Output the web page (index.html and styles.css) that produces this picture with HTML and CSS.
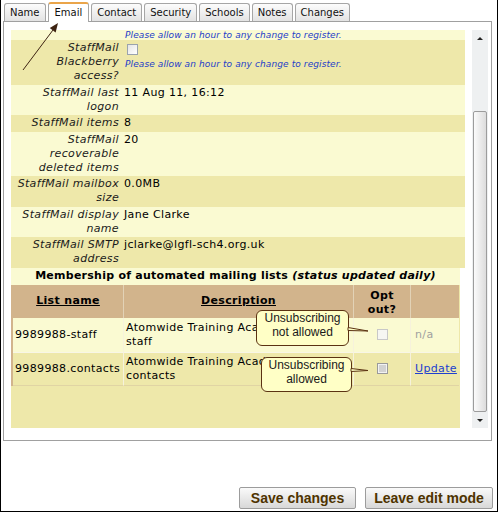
FILE: index.html
```html
<!DOCTYPE html>
<html>
<head>
<meta charset="utf-8">
<link rel="stylesheet" href="styles.css">
</head>
<body>
<div class="frame">
  <div class="tabs">
    <div class="tab">Name</div>
    <div class="tab active">Email</div>
    <div class="tab">Contact</div>
    <div class="tab">Security</div>
    <div class="tab">Schools</div>
    <div class="tab">Notes</div>
    <div class="tab">Changes</div>
  </div>

  <div class="panel">
    <div class="content">
      <div class="info">
        <div class="row light first">
          <div class="lbl"></div>
          <div class="val"><span class="note">Please allow an hour to any change to register.</span></div>
        </div>
        <div class="row dark">
          <div class="lbl">StaffMail Blackberry access?</div>
          <div class="val"><span class="cb cb-block"></span><div class="note note-line">Please allow an hour to any change to register.</div></div>
        </div>
        <div class="row light">
          <div class="lbl">StaffMail last logon</div>
          <div class="val">11 Aug 11, 16:12</div>
        </div>
        <div class="row dark">
          <div class="lbl">StaffMail items</div>
          <div class="val">8</div>
        </div>
        <div class="row light">
          <div class="lbl">StaffMail recoverable deleted items</div>
          <div class="val">20</div>
        </div>
        <div class="row dark">
          <div class="lbl">StaffMail mailbox size</div>
          <div class="val">0.0MB</div>
        </div>
        <div class="row light">
          <div class="lbl">StaffMail display name</div>
          <div class="val">Jane Clarke</div>
        </div>
        <div class="row dark">
          <div class="lbl">StaffMail SMTP address</div>
          <div class="val">jclarke@lgfl-sch4.org.uk</div>
        </div>
      </div>

      <div class="lists">
        <div class="lists-head">Membership of automated mailing lists <i>(status updated daily)</i></div>
        <table class="mtable">
          <colgroup>
            <col class="c-name"><col class="c-desc"><col class="c-opt"><col class="c-act">
          </colgroup>
          <tr class="hrow">
            <th><span class="ul">List name</span></th>
            <th><span class="ul">Description</span></th>
            <th class="opt">Opt<br>out?</th>
            <th class="last"></th>
          </tr>
          <tr class="r r1">
            <td>9989988-staff</td>
            <td>Atomwide Training Academy - all<br>staff</td>
            <td class="center"><span class="cb cb-off"></span></td>
            <td class="last"><span class="na">n/a</span></td>
          </tr>
          <tr class="r r2">
            <td>9989988.contacts</td>
            <td>Atomwide Training Academy - all<br>contacts</td>
            <td class="center"><span class="cb cb-grey"></span></td>
            <td class="last"><a class="link" href="#">Update</a></td>
          </tr>
        </table>
      </div>
    </div>

    <div class="scrollbar">
      <div class="sb-btn"><span class="tri-up"></span></div>
      <div class="sb-space"></div>
      <div class="thumb"></div>
      <div class="sb-btn"><span class="tri-down"></span></div>
    </div>
  </div>

  <div class="buttons">
    <button class="btn btn-save">Save changes</button>
    <button class="btn btn-leave">Leave edit mode</button>
  </div>

  <div class="overlay">
    <div class="callout c1">Unsubscribing<br>not allowed</div>
    <div class="callout c2">Unsubscribing<br>allowed</div>
    <svg class="ov-svg" width="498" height="512" viewBox="0 0 498 512">
      <line x1="23" y1="70" x2="53" y2="30" stroke="#3e2412" stroke-width="1"/>
      <polygon points="58,23 55.6,32.4 49.8,28.1" fill="#3e2412"/>
      <polygon points="348,327.5 368,331 348,330.5" fill="#ffffc6" stroke="#5b3212" stroke-width="1"/>
      <polygon points="351,368.5 368,370.5 351,371.5" fill="#ffffc6" stroke="#5b3212" stroke-width="1"/>
    </svg>
  </div>
</div>
</body>
</html>
```

FILE: styles.css
```css
html, body {
  margin: 0;
  padding: 0;
  background: #fff;
}

body {
  font-family: "DejaVu Sans", Verdana, sans-serif;
  font-size: 11px;
  color: #000;
}

.frame {
  position: relative;
  width: 498px;
  height: 512px;
  box-sizing: border-box;
  border: 1px solid #000;
  border-top: none;
  background: #fff;
  overflow: hidden;
}

/* Tabs */
.tabs {
  display: flex;
  align-items: flex-end;
  gap: 2px;
  height: 21px;
  padding-left: 3px;
  box-sizing: border-box;
  position: relative;
  z-index: 2;
}

.tab {
  height: 18px;
  box-sizing: border-box;
  padding: 0 5px;
  border: 1px solid #a6a6a6;
  border-bottom: none;
  border-radius: 3px 3px 0 0;
  background: linear-gradient(#fcfcfc, #e3e3e3);
  font-size: 10px;
  line-height: 17px;
  color: #111;
  white-space: nowrap;
}

.tab.active {
  height: 20px;
  margin-bottom: -1px;
  padding: 0 6px;
  background: #fff;
  border-top: 2px solid #eaa54a;
  line-height: 17px;
}

/* Panel */
.panel {
  display: flex;
  gap: 7px;
  margin-left: 2px;
  width: 489px;
  height: 420px;
  box-sizing: border-box;
  border: 1px solid #a0a0a0;
  padding: 8px 3px 12px 7px;
  position: relative;
  z-index: 1;
}

.content {
  width: 454px;
  display: flex;
  flex-direction: column;
  letter-spacing: 0.35px;
}

.row {
  display: grid;
  grid-template-columns: 110px 1fr;
  line-height: 14px;
}

.row.light { background: #fafad2; }
.row.dark { background: #eee8aa; }

.lbl {
  text-align: right;
  font-style: italic;
  padding: 1px 2px 1.5px 4px;
  color: #1a1a1a;
}

.val {
  padding: 1px 0 1.5px 3px;
}

.row.first .lbl,
.row.first .val {
  padding-top: 0;
  padding-bottom: 0;
  line-height: 10px;
  height: 10px;
}

.note {
  font-size: 9px;
  font-style: italic;
  color: #2440c8;
  letter-spacing: 0.1px;
  padding-left: 1px;
}

.note-line {
  line-height: 18px;
}

.cb {
  display: inline-block;
  width: 11px;
  height: 11px;
  box-sizing: border-box;
  border: 1px solid #9aa3ad;
  background: linear-gradient(135deg, #e4e4e4, #ffffff);
  vertical-align: middle;
}

.cb-block {
  display: block;
  margin: 3px 0 0 3px;
}

.cb-off {
  border-color: #c8c8c8;
  background: #f6f6f2;
}

.cb-grey {
  border-color: #9a9a9a;
  background: #d2d2d2;
  box-shadow: inset 0 0 0 1px #f2f2f2;
}

/* Mailing lists */
.lists {
  flex: 1;
  width: 449px;
  background: #eee8aa;
}

.lists-head {
  background: #fafad2;
  text-align: center;
  font-weight: bold;
  line-height: 14px;
  padding: 1px 0 2px;
  white-space: nowrap;
  letter-spacing: 0.25px;
}

.mtable {
  border-collapse: separate;
  border-spacing: 0;
  width: 448px;
  table-layout: fixed;
  border-left: 2px solid #d2b48c;
}

.c-name { width: 111px; }
.c-desc { width: 230px; }
.c-opt { width: 57px; }
.c-act { width: 48px; }

.mtable th {
  background: #d2b48c;
  font-weight: bold;
  text-align: center;
  vertical-align: middle;
  padding: 0;
  line-height: 14px;
  border-right: 1px solid #e2d2b6;
}

.mtable th.opt {
  padding-top: 3px;
}

.mtable .hrow { height: 33px; }
.mtable .r { height: 34px; }

.ul { text-decoration: underline; }

.mtable td {
  vertical-align: middle;
  padding: 0 2px;
  line-height: 14px;
  border-right: 1px solid #f6f2dc;
  white-space: nowrap;
  overflow: hidden;
}

.mtable th.last,
.mtable td.last { border-right: none; }

.mtable td.last { padding-left: 4px; }

.mtable .r1 td { background: #fafad2; }
.mtable .r2 td {
  background: #eee8aa;
  border-top: 1px solid #f8f6e6;
  border-bottom: 1px solid #e0d4a4;
}

.mtable td.center { text-align: center; }

.na { color: #a0a0a0; }

.link {
  color: #2040d0;
  text-decoration: underline;
}

/* Scrollbar */
.scrollbar {
  width: 16px;
  display: flex;
  flex-direction: column;
  background: #eef0f1;
}

.sb-btn {
  height: 16px;
  flex: none;
  display: flex;
  align-items: center;
  justify-content: center;
}

.tri-up {
  width: 0;
  height: 0;
  border-left: 3px solid transparent;
  border-right: 3px solid transparent;
  border-bottom: 3px solid #222;
}

.tri-down {
  width: 0;
  height: 0;
  border-left: 3px solid transparent;
  border-right: 3px solid transparent;
  border-top: 3px solid #222;
}

.sb-space {
  height: 65px;
  flex: none;
}

.thumb {
  flex: 1;
  margin: 0 1px;
  border: 1px solid #9c9c9c;
  border-radius: 2px;
  background: linear-gradient(90deg, #fbfbfb, #dcdcdc);
}

/* Buttons */
.buttons {
  display: flex;
  justify-content: flex-end;
  gap: 9px;
  margin-top: 46px;
  padding-right: 4px;
}

.btn {
  height: 22px;
  box-sizing: border-box;
  padding: 0;
  font-family: "Liberation Sans", Arial, sans-serif;
  font-weight: bold;
  font-size: 14px;
  color: #4e3300;
  border: 1px solid #9c9c9c;
  border-radius: 2px;
  background: linear-gradient(#fafafa, #d8d8d8);
}

.btn-save { width: 117px; }
.btn-leave { width: 128px; }

/* Overlays: annotations drawn over the screenshot */
.overlay {
  position: absolute;
  left: -1px;
  top: 0;
  width: 498px;
  height: 512px;
  pointer-events: none;
  z-index: 5;
}

.ov-svg {
  position: absolute;
  left: 0;
  top: 0;
}

.callout {
  position: absolute;
  box-sizing: border-box;
  background: #ffffc6;
  border: 1.5px solid #5b3212;
  border-radius: 6px;
  font-family: "Liberation Sans", Arial, sans-serif;
  font-size: 12px;
  line-height: 14px;
  text-align: center;
  color: #1a1a1a;
}

.c1 {
  left: 256px;
  top: 310px;
  width: 93px;
  height: 36px;
}

.c2 {
  left: 261px;
  top: 357px;
  width: 91px;
  height: 35px;
}
```
